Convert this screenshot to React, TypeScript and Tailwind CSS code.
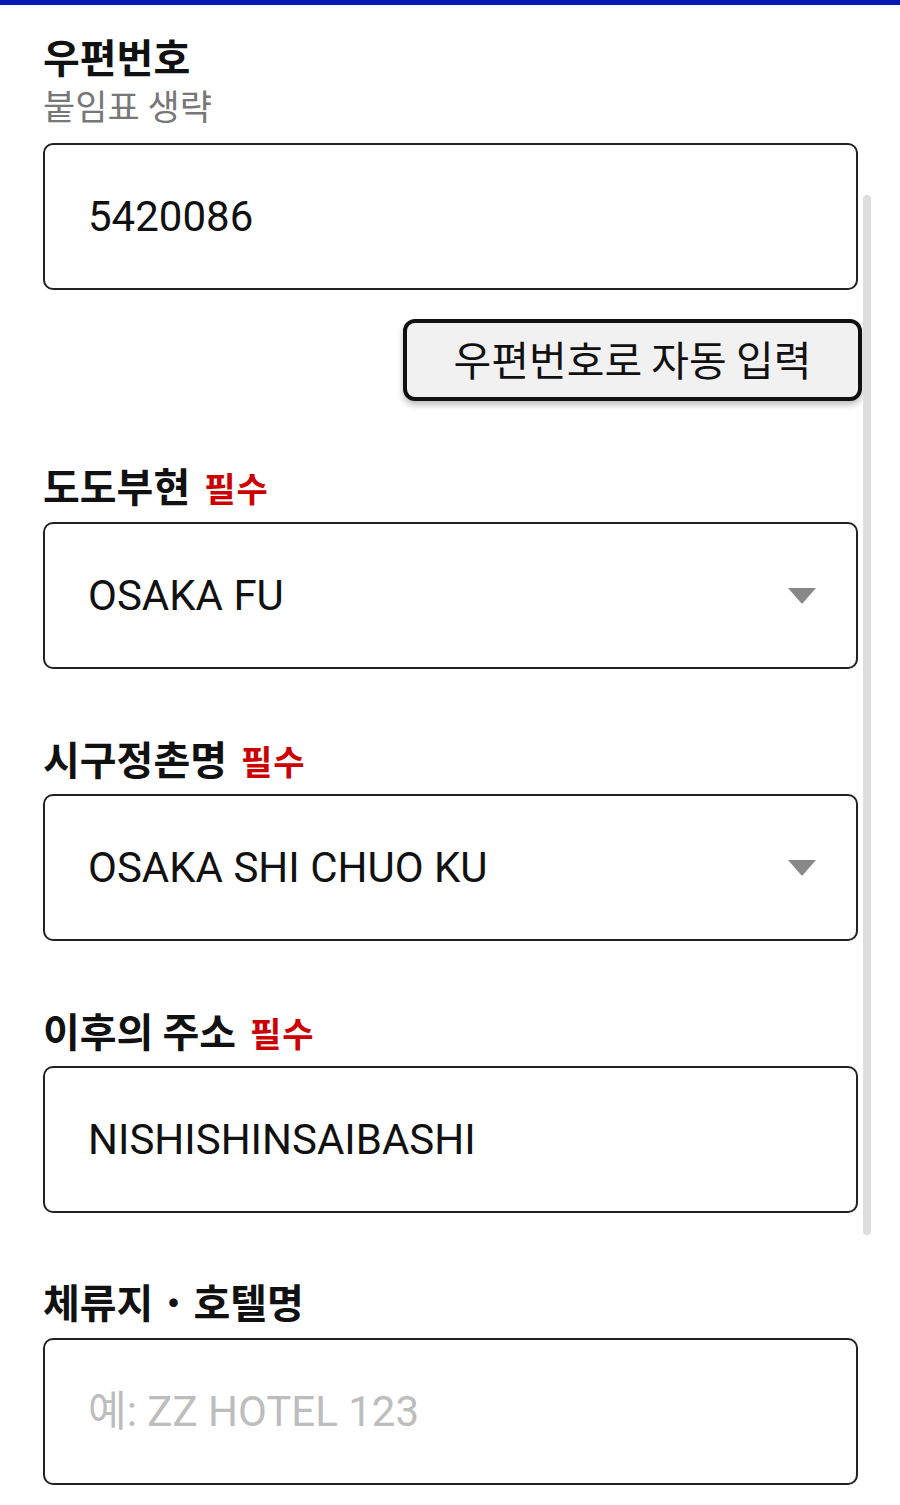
const labelFont = { fontFamily: '"Noto Sans CJK KR", "Noto Sans", sans-serif' }

const Required = () => (
    <span className="ml-[14px] text-[34px] leading-[44px] font-bold tracking-[1px] text-[#cc0000]">필수</span>
)

const Label = ({ children, required }: { children: React.ReactNode; required?: boolean }) => (
    <div className="h-[44px] text-[40px] leading-[44px] font-bold text-[#111] flex items-baseline whitespace-nowrap">
        <span>{children}</span>
        {required && <Required />}
    </div>
)

const Box = ({ value, placeholder, select }: { value?: string; placeholder?: string; select?: boolean }) => (
    <div className="h-[147px] border-2 border-[#222] rounded-[10px] flex items-center justify-between pl-[43px] pr-[40px] bg-white">
        <span className={`text-[42px] [font-family:Roboto,'Noto_Sans_CJK_KR',sans-serif] ${value ? "text-[#111]" : "text-[#bdbdbd]"}`}>
            {value ?? placeholder}
        </span>
        {select && (
            <svg width="28" height="16" viewBox="0 0 28 16">
                <polygon points="0,0 28,0 14,16" fill="#888" />
            </svg>
        )}
    </div>
)

const App = () => {
    return (
        <div className="min-h-screen bg-white relative w-[900px]" style={labelFont}>
            <div className="h-[5px] bg-[#0018b4]" />
            {/* scrollbar */}
            <div className="absolute left-[863px] top-[195px] w-[8px] h-[1040px] rounded-full bg-[#dedede]" />
            <main className="pl-[43px] w-[858px] pb-[20px]">
                <div className="pt-[29px]">
                    <Label>우편번호</Label>
                    <p className="text-[35px] leading-[38px] text-[#777] mt-[8px]">붙임표 생략</p>
                </div>
                <div className="mt-[19px]">
                    <Box value="5420086" />
                </div>
                <div className="flex justify-end mt-[29px] mr-[-4px]">
                    <button className="w-[459px] h-[82px] border-[4px] border-[#111] rounded-[12px] bg-[#f1f1f1] text-[41px] text-[#111] shadow-[0_4px_6px_rgba(0,0,0,0.25)] flex items-center justify-center pb-[2px]">
                        우편번호로 자동 입력
                    </button>
                </div>

                <div className="mt-[62px] mb-[15px]">
                    <Label required>도도부현</Label>
                </div>
                <Box value="OSAKA FU" select />

                <div className="mt-[67px] mb-[14px]">
                    <Label required>시구정촌명</Label>
                </div>
                <Box value="OSAKA SHI CHUO KU" select />

                <div className="mt-[67px] mb-[14px]">
                    <Label required>이후의 주소</Label>
                </div>
                <Box value="NISHISHINSAIBASHI" />

                <div className="mt-[66px] mb-[15px]">
                    <Label>체류지<span className="font-normal">・</span>호텔명</Label>
                </div>
                <Box placeholder="예: ZZ HOTEL 123" />
            </main>
        </div>
    )
}
export default App
